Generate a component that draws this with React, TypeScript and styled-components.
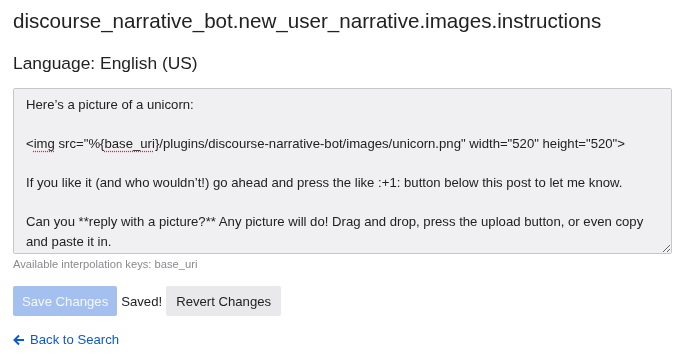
import styled, { createGlobalStyle } from 'styled-components';

const GlobalStyle = createGlobalStyle`
	body {
		margin: 0;
		background: #fff;
		font-family: 'Liberation Sans', Arial, sans-serif;
		color: #222;
	}
`;

const Page = styled.div`
	padding: 6px 18px 0 13px;
`;

const Title = styled.h1`
	margin: 0;
	font-size: 20.6px;
	font-weight: 400;
	line-height: 30px;
`;

const LanguageLabel = styled.h3`
	margin: 15px 0 0;
	font-size: 17.4px;
	font-weight: 400;
	line-height: 24px;
`;

const Editor = styled.div`
	margin-top: 13px;
	box-sizing: border-box;
	height: 166px;
	padding: 6px 12px;
	background: #f0f0f3;
	border: 1px solid #c6c6cc;
	border-radius: 2px;
	font-size: 13.15px;
	line-height: 19.5px;
	white-space: pre-wrap;
	overflow: auto;
	resize: vertical;
`;

const Misspelled = styled.span`
	text-decoration: underline dotted #e0302c;
	text-underline-offset: 3px;
`;

const HelpText = styled.div`
	margin-top: 4px;
	font-size: 11.2px;
	color: #8a8a8f;
`;

const Actions = styled.div`
	display: flex;
	align-items: center;
	gap: 4px;
	margin-top: 16px;
`;

const Button = styled.button<{ $primary?: boolean }>`
	height: 30px;
	padding: 0 ${(p) => (p.$primary ? '9px' : '10px')};
	border: none;
	border-radius: 2px;
	font-family: inherit;
	font-size: 13.15px;
	background: ${(p) => (p.$primary ? '#a4c0ee' : '#e9e9ec')};
	color: ${(p) => (p.$primary ? '#f4f7fd' : '#222')};
	cursor: ${(p) => (p.$primary ? 'default' : 'pointer')};
`;

const SavedText = styled.span`
	font-size: 13.15px;
`;

const BackLink = styled.a`
	display: inline-flex;
	align-items: center;
	gap: 5px;
	margin-top: 16px;
	font-size: 13.15px;
	color: #0a5ad0;
	text-decoration: none;
`;

const Arrow = () => (
	<svg width="12" height="12" viewBox="0 0 12 12" fill="none" stroke="currentColor" strokeWidth="2">
		<path d="M11 6H2M6 1.5L1.5 6 6 10.5" />
	</svg>
);

export default function App() {
	return (
		<>
			<GlobalStyle />
			<Page>
				<Title>discourse_narrative_bot.new_user_narrative.images.instructions</Title>
				<LanguageLabel>Language: English (US)</LanguageLabel>
				<Editor>
					{'Here’s a picture of a unicorn:\n\n<'}
					<Misspelled>img</Misspelled>
					{' src="%{'}
					<Misspelled>base_uri</Misspelled>
					{'}/plugins/discourse-narrative-bot/images/unicorn.png" width="520" height="520">\n\n'}
					{'If you like it (and who wouldn’t!) go ahead and press the like :+1: button below this post to let me know.\n\n'}
					{'Can you **reply with a picture?** Any picture will do! Drag and drop, press the upload button, or even copy and paste it in.'}
				</Editor>
				<HelpText>Available interpolation keys: base_uri</HelpText>
				<Actions>
					<Button $primary disabled>Save Changes</Button>
					<SavedText>Saved!</SavedText>
					<Button>Revert Changes</Button>
				</Actions>
				<BackLink href="#">
					<Arrow />
					Back to Search
				</BackLink>
			</Page>
		</>
	);
}
